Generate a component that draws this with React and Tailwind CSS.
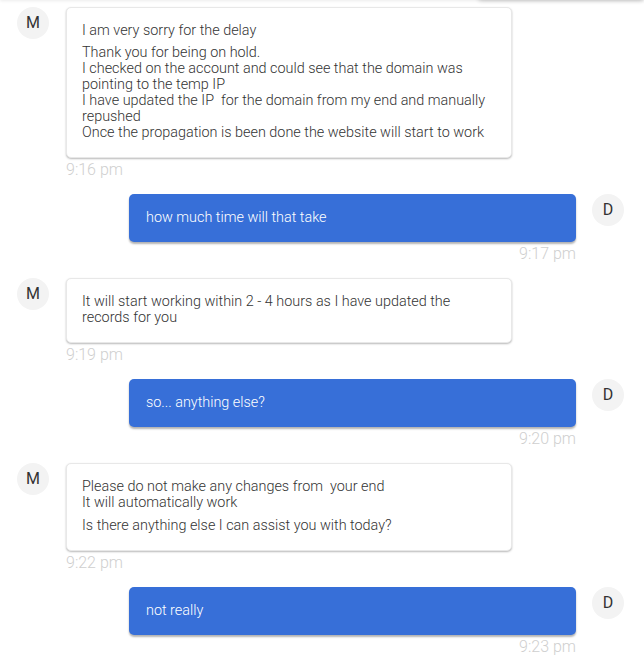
import React from "react";

const font = { fontFamily: "Roboto, 'Noto Sans', sans-serif" };

function Avatar({ letter }) {
  return (
    <div className="w-8 h-8 shrink-0 rounded-full bg-[#f3f3f3] flex items-center justify-center text-[16px] leading-none text-[#333] font-normal">
      {letter}
    </div>
  );
}

function Incoming({ paras, time, gap }) {
  return (
    <div className="flex items-start gap-[17px] mb-3">
      <Avatar letter="M" />
      <div className="flex flex-col">
        <div className="w-[446px] bg-white border border-[#e8e8e8] rounded-[5px] px-[15px] pt-[15px] pb-[16px] shadow-[0_1px_2px_rgba(0,0,0,0.28)] text-[14.4px] leading-[16px] font-light text-[#333]">
          {paras.map((p, i) => (
            <div key={i} className={i > 0 ? gap : ""}>
              {p.map((l, j) => (
                <div key={j}>{l}</div>
              ))}
            </div>
          ))}
        </div>
        <div className="text-[16px] leading-[24px] font-light text-[#cfcfcf]">{time}</div>
      </div>
    </div>
  );
}

function Outgoing({ text, time }) {
  return (
    <div className="flex items-start justify-end gap-4 mb-3">
      <div className="flex flex-col items-end">
        <div className="w-[447px] h-12 bg-[#376fd8] rounded-[5px] px-[17px] flex items-center shadow-[0_2px_2px_rgba(0,0,0,0.3)] text-[14.4px] leading-[16px] font-light text-white">
          {text}
        </div>
        <div className="text-[16px] leading-[24px] font-light text-[#cfcfcf]">{time}</div>
      </div>
      <Avatar letter="D" />
    </div>
  );
}

export default function App() {
  return (
    <div style={font} className="relative w-[644px] h-[655px] bg-white overflow-hidden pl-[17px] pr-5 pt-[7px]">
      <div className="absolute -top-3 left-0 right-0 h-3 shadow-[0_1px_3px_rgba(0,0,0,0.08)]" />
      <div className="absolute -top-3 left-[478px] right-0 h-3 rounded-b shadow-[0_1px_4px_rgba(0,0,0,0.2)]" />
      <Incoming
        gap="mt-[6px]"
        paras={[
          ["I am very sorry for the delay"],
          [
            "Thank you for being on hold.",
            "I checked on the account and could see that the domain was",
            "pointing to the temp IP",
            "I have updated the IP\u00a0 for the domain from my end and manually",
            "repushed",
            "Once the propagation is been done the website will start to work",
          ],
        ]}
        time="9:16 pm"
      />
      <Outgoing text="how much time will that take" time="9:17 pm" />
      <Incoming
        gap="mt-[7px]"
        paras={[["It will start working within 2 - 4 hours as I have updated the", "records for you"]]}
        time="9:19 pm"
      />
      <Outgoing text="so... anything else?" time="9:20 pm" />
      <Incoming
        gap="mt-[7px]"
        paras={[
          ["Please do not make any changes from\u00a0 your end", "It will automatically work"],
          ["Is there anything else I can assist you with today?"],
        ]}
        time="9:22 pm"
      />
      <Outgoing text="not really" time="9:23 pm" />
    </div>
  );
}
